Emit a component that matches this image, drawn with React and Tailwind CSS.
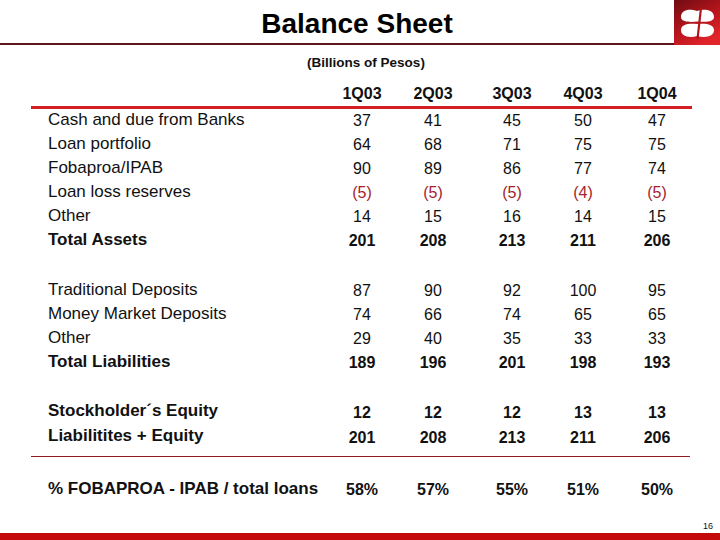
const ROWS_A = [
  { label: 'Cash and due from Banks', v: ['37', '41', '45', '50', '47'] },
  { label: 'Loan portfolio', v: ['64', '68', '71', '75', '75'] },
  { label: 'Fobaproa/IPAB', v: ['90', '89', '86', '77', '74'] },
  { label: 'Loan loss reserves', v: ['(5)', '(5)', '(5)', '(4)', '(5)'], neg: true },
  { label: 'Other', v: ['14', '15', '16', '14', '15'] },
  { label: 'Total Assets', v: ['201', '208', '213', '211', '206'], bold: true },
]

const ROWS_B = [
  { label: 'Traditional Deposits', v: ['87', '90', '92', '100', '95'] },
  { label: 'Money Market Deposits', v: ['74', '66', '74', '65', '65'] },
  { label: 'Other', v: ['29', '40', '35', '33', '33'] },
  { label: 'Total Liabilities', v: ['189', '196', '201', '198', '193'], bold: true },
]

const ROWS_C = [
  { label: 'Stockholder´s Equity', v: ['12', '12', '12', '13', '13'], bold: true },
  { label: 'Liabilitites + Equity', v: ['201', '208', '213', '211', '206'], bold: true },
]

const GRID = 'grid grid-cols-[279px_70px_72px_86px_56px_92px] pl-[48px]'

function Row({ label, v, bold, neg, h = 'h-[24px]' }) {
  return (
    <div className={`${GRID} ${h} items-center`}>
      <div className={`text-[17px] leading-none text-[#111] whitespace-nowrap ${bold ? 'font-bold' : ''}`}>{label}</div>
      {v.map((x, i) => (
        <div
          key={i}
          className={`text-center text-[16px] leading-none pt-[4px] ${bold ? 'font-bold' : ''} ${neg ? 'text-[#a3222b]' : 'text-[#111]'}`}
        >
          {x}
        </div>
      ))}
    </div>
  )
}

function Logo() {
  return (
    <svg width="46" height="45" viewBox="0 0 46 45">
      <defs>
        <linearGradient id="lg" x1="0" y1="0" x2="0.6" y2="1">
          <stop offset="0" stopColor="#6e0c12" />
          <stop offset="0.55" stopColor="#b3141c" />
          <stop offset="1" stopColor="#e0242a" />
        </linearGradient>
      </defs>
      <rect width="46" height="45" fill="url(#lg)" />
      <path d="M7 17 C7 9, 16 8.5, 23 11 C30 8.5, 40 9, 40 17 C40 21.5, 33 22.5, 24 21.5 C15 22.5, 7 22, 7 17 Z" fill="#fff" />
      <path d="M7 30 C7 24, 15 23, 23 24 C31 23, 40 24, 40 30 C40 37, 31 38, 23 36 C16 38, 7 37, 7 30 Z" fill="#fff" />
      <path d="M27 8 L23.5 39" stroke="#b3141c" strokeWidth="2.2" />
    </svg>
  )
}

export default function App() {
  return (
    <div className="w-[720px] h-[540px] bg-white flex flex-col font-['Liberation_Sans',Arial,sans-serif] text-[#111]">
      {/* title bar */}
      <div className="flex h-[45px]">
        <div className="flex-1 flex items-center justify-center border-b-2 border-[#5c1518] pl-[40px]">
          <div className="text-[28px] font-bold leading-none text-black pt-[4px]">Balance Sheet</div>
        </div>
        <Logo />
      </div>

      <div className="mt-[10px] h-[16px] text-center text-[13.5px] font-bold leading-[16px] pl-[12px]">(Billions of Pesos)</div>

      {/* column headers */}
      <div className={`${GRID} mt-[13px] h-[20px] items-center`}>
        <div />
        {['1Q03', '2Q03', '3Q03', '4Q03', '1Q04'].map(q => (
          <div key={q} className="text-center text-[16px] font-bold leading-none">{q}</div>
        ))}
      </div>
      <div className="mt-[2px] ml-[31px] w-[661px] h-[3px] bg-[#d11f24]" />

      <div className="-mt-[2px]">
        {ROWS_A.map(r => <Row key={r.label} {...r} />)}
      </div>

      <div className="mt-[26px]">
        {ROWS_B.map((r, i) => <Row key={i} {...r} />)}
      </div>

      <div className="mt-[25px]">
        {ROWS_C.map(r => <Row key={r.label} {...r} h="h-[25px]" />)}
      </div>

      <div className="mt-[8px] ml-[31px] w-[659px] h-[1px] bg-[#8e1d22]" />

      <div className="mt-[19px]">
        <Row label="% FOBAPROA - IPAB / total loans" v={['58%', '57%', '55%', '51%', '50%']} bold />
      </div>

      <div className="mt-auto flex justify-end pr-[7px] pb-[2px]">
        <div className="text-[9px] leading-none">16</div>
      </div>
      <div className="h-[7px] bg-[#c40a0a]" />
    </div>
  )
}
